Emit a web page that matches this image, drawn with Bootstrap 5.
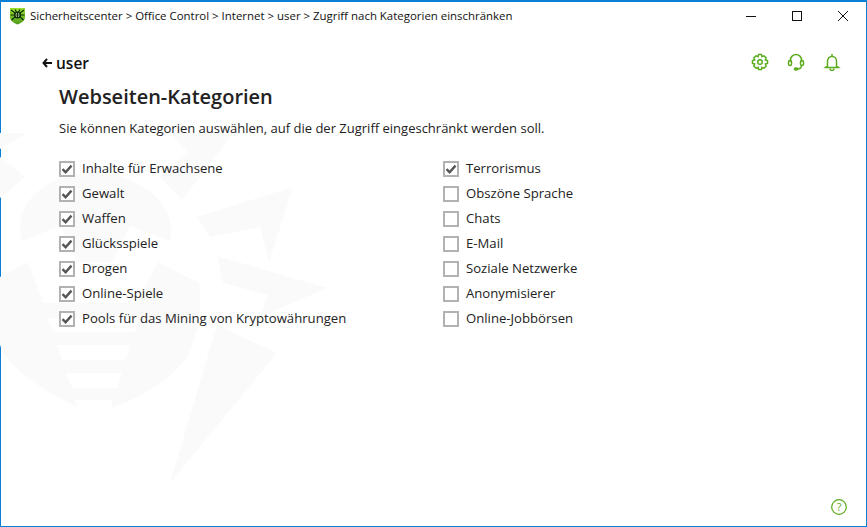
<!DOCTYPE html>
<html lang="de">
<head>
  <meta charset="UTF-8">
  <title>Webseiten-Kategorien</title>
  <link href="https://cdn.jsdelivr.net/npm/bootstrap@5.3.2/dist/css/bootstrap.min.css" rel="stylesheet">
  <style>
    html, body { height: 100%; }
    body { background: #fff; color: #222; font-family: "Open Sans", "Noto Sans", sans-serif; font-size: 13.15px; overflow: hidden; }
    .app-window { height: 527px; border: 1px solid #0a7fd6; border-top-width: 2px; position: relative; }
    .app-mark { position: absolute; left: -1px; top: -2px; z-index: 0; }
    .app-window > div { position: relative; z-index: 1; }
    .app-title { height: 28px; padding-left: 8px; font-size: 11.45px; color: #111; }
    .win-btn { width: 46px; height: 28px; }
    .top-zone { height: 54px; padding: 23px 25px 0 41px; }
    .back-link { color: #111; font-size: 15.5px; line-height: 20px; font-weight: 600; text-decoration: none; }
    .tool-row { gap: 18px; }
    .main-zone { padding-left: 58px; }
    .page-head { font-size: 20px; font-weight: 600; line-height: 26px; margin: 0 0 10px; color: #222; }
    .intro-line { font-size: 13px; line-height: 17px; margin: 0 0 19px; }
    .cat-col { width: 384px; }
    .cat-row { height: 25px; gap: 7px; margin: 0; padding: 0; }
    .cat-box { appearance: none; width: 16px; height: 16px; border: 2px solid #b2b2b2; background: #fff; flex: none; margin: 0; position: relative; }
    .cat-box:checked { background: #fff url("data:image/svg+xml,%3Csvg xmlns='http://www.w3.org/2000/svg' viewBox='0 0 12 12'%3E%3Cpath d='M1.5 6.2 4.6 9.2 10.5 2.6' fill='none' stroke='%23555' stroke-width='2.4'/%3E%3C/svg%3E") center/12px 12px no-repeat; }
    .help-spot { position: absolute; right: 19px; bottom: 11px; }
  </style>
</head>
<body>
  <div class="app-window">
    <!-- faint spider watermark, page coordinates -->
    <svg class="app-mark" width="867" height="527" viewBox="0 0 867 527">
      <g fill="#fafafa">
        <path d="M0 133H27L0 149Z"/>
        <path d="M0 157 25 177 0 198Z"/>
        <path d="M170 133H233L182 200 160 177 188 152Z"/>
        <path d="M22 241C12 205 45 172 95 173 140 174 178 205 170 240L167 240 130 226 112 262H78L60 226Z"/>
        <path d="M197 217 293 187 269 262 260 227 210 237Z"/>
        <path d="M217 256 327 288 260 317 268 295 223 283Z"/>
        <path d="M217 325 277 353 170 483Z"/>
        <path fill-rule="evenodd" d="M0 277 28 262 43 303H137L158 262 199 283C203 310 198 335 187 357 168 382 140 398 112 408V400H75L77 407C45 392 20 375 3 353L0 345Z M48 318H138L135 332H53Z M57 345H130L126 360H62Z M66 373H122L117 388H72Z"/>
      </g>
    </svg>
    <div class="app-title d-flex align-items-center justify-content-between">
      <div class="d-flex align-items-center gap-1">
        <svg width="17" height="18" viewBox="0 0 17 18">
          <defs><linearGradient id="shieldFill" x1="0" y1="0" x2="0" y2="1"><stop offset="0" stop-color="#9be22d"/><stop offset="1" stop-color="#4f9a1c"/></linearGradient></defs>
          <path d="M1 1H16V10C16 14 12 16 8.500 17.500 5 16 1 14 1 10Z" fill="url(#shieldFill)"/>
          <path d="M2 3 6 6M15 3 11 6M1.500 8H5M15.500 8H12M2.500 13 6 10M14.500 13 11 10M6 2.500 7.500 5M11 2.500 9.500 5" stroke="#10300a" stroke-width="1.200"/>
          <circle cx="8.500" cy="8" r="3.600" fill="#10300a"/>
          <circle cx="8.500" cy="8" r="2" fill="#dff3c8"/>
          <path d="M8.500 6V10M6.500 8H10.500" stroke="#10300a"/>
        </svg>
        <span>Sicherheitscenter &gt; Office Control &gt; Internet &gt; user &gt; Zugriff nach Kategorien einschränken</span>
      </div>
      <div class="d-flex">
        <div class="win-btn d-flex align-items-center justify-content-center"><svg width="12" height="12"><path d="M1 6.500H11" stroke="#111"/></svg></div>
        <div class="win-btn d-flex align-items-center justify-content-center"><svg width="12" height="12"><rect x="1.500" y="1.500" width="9" height="9" fill="none" stroke="#111"/></svg></div>
        <div class="win-btn d-flex align-items-center justify-content-center"><svg width="12" height="12"><path d="M1 1 11 11M11 1 1 11" stroke="#111"/></svg></div>
      </div>
    </div>
    <div class="top-zone d-flex justify-content-between align-items-start">
      <a href="#" class="back-link d-flex align-items-center gap-1">
        <svg width="10" height="10" viewBox="0 0 10 10"><path d="M5 1 1.500 5 5 9M1.500 5H10" fill="none" stroke="#111" stroke-width="2"/></svg>
        <span>user</span>
      </a>
      <div class="tool-row d-flex">
        <svg width="18" height="18" viewBox="0 0 18 18" fill="none" stroke="#5cac1e" stroke-width="1.500"><circle cx="9" cy="9" r="2.300"/><path d="M7.500 1.500H10.500L11 3.700 13 2.800 15.200 5 14.300 7 16.500 7.500V10.500L14.300 11 15.200 13 13 15.200 11 14.300 10.500 16.500H7.500L7 14.300 5 15.200 2.800 13 3.700 11 1.500 10.500V7.500L3.700 7 2.800 5 5 2.800 7 3.700Z"/></svg>
        <svg width="18" height="18" viewBox="0 0 18 18" fill="none" stroke="#5cac1e" stroke-width="1.500"><path d="M3.500 9V7A5.500 5.500 0 0 1 14.500 7V9"/><rect x="1.500" y="7.500" width="3" height="5" rx="1.500"/><rect x="13.500" y="7.500" width="3" height="5" rx="1.500"/><path d="M14.500 12.500C14.500 15 12.500 16 10 16"/><rect x="7.500" y="15" width="3" height="2" rx="1" fill="#5cac1e"/></svg>
        <svg width="18" height="18" viewBox="0 0 18 18" fill="none" stroke="#5cac1e" stroke-width="1.500"><path d="M4.500 13V8A4.500 4.500 0 0 1 13.500 8V13L15.500 14.500H2.500Z"/><path d="M9 1V3M7 15.500A2 2 0 0 0 11 15.500"/></svg>
      </div>
    </div>
    <div class="main-zone">
      <h1 class="page-head">Webseiten-Kategorien</h1>
      <p class="intro-line">Sie können Kategorien auswählen, auf die der Zugriff eingeschränkt werden soll.</p>
      <div class="d-flex">
        <div class="cat-col">
          <label class="cat-row d-flex align-items-center"><input class="cat-box" type="checkbox" checked>Inhalte für Erwachsene</label>
          <label class="cat-row d-flex align-items-center"><input class="cat-box" type="checkbox" checked>Gewalt</label>
          <label class="cat-row d-flex align-items-center"><input class="cat-box" type="checkbox" checked>Waffen</label>
          <label class="cat-row d-flex align-items-center"><input class="cat-box" type="checkbox" checked>Glücksspiele</label>
          <label class="cat-row d-flex align-items-center"><input class="cat-box" type="checkbox" checked>Drogen</label>
          <label class="cat-row d-flex align-items-center"><input class="cat-box" type="checkbox" checked>Online-Spiele</label>
          <label class="cat-row d-flex align-items-center"><input class="cat-box" type="checkbox" checked>Pools für das Mining von Kryptowährungen</label>
        </div>
        <div class="cat-col">
          <label class="cat-row d-flex align-items-center"><input class="cat-box" type="checkbox" checked>Terrorismus</label>
          <label class="cat-row d-flex align-items-center"><input class="cat-box" type="checkbox">Obszöne Sprache</label>
          <label class="cat-row d-flex align-items-center"><input class="cat-box" type="checkbox">Chats</label>
          <label class="cat-row d-flex align-items-center"><input class="cat-box" type="checkbox">E-Mail</label>
          <label class="cat-row d-flex align-items-center"><input class="cat-box" type="checkbox">Soziale Netzwerke</label>
          <label class="cat-row d-flex align-items-center"><input class="cat-box" type="checkbox">Anonymisierer</label>
          <label class="cat-row d-flex align-items-center"><input class="cat-box" type="checkbox">Online-Jobbörsen</label>
        </div>
      </div>
    </div>
    <svg class="help-spot" width="16" height="16" viewBox="0 0 16 16"><circle cx="8" cy="8" r="7.300" fill="none" stroke="#5cac1e" stroke-width="1.200"/><text x="8" y="12" text-anchor="middle" font-size="11" fill="#5cac1e" font-family="Open Sans">?</text></svg>
  </div>
  <script src="https://cdn.jsdelivr.net/npm/bootstrap@5.3.2/dist/js/bootstrap.bundle.min.js"></script>
</body>
</html>
